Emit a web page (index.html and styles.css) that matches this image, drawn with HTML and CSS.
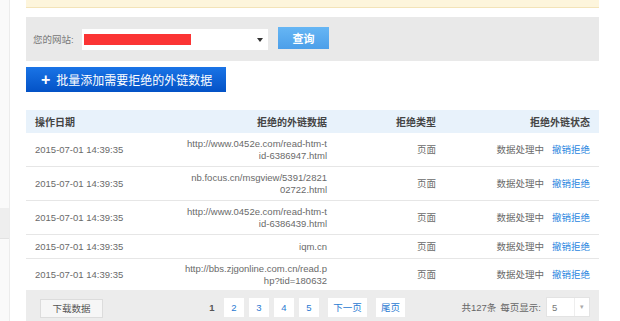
FILE: index.html
```html
<!DOCTYPE html>
<html lang="zh-CN">
<head>
  <meta charset="UTF-8">
  <title>拒绝外链</title>
  <link rel="stylesheet" href="styles.css">
</head>
<body>
  <div class="page">
    <div class="sidebar">
      <div class="side-item"></div>
    </div>
    <div class="main">
      <div class="notice"></div>

      <div class="filter">
        <span class="filter-label">您的网站:</span>
        <div class="site-select">
          <span class="redact"></span>
          <span class="caret"></span>
        </div>
        <button class="btn-query">查询</button>
      </div>

      <button class="btn-add"><span class="plus">+</span>批量添加需要拒绝的外链数据</button>

      <table class="links">
        <thead>
          <tr>
            <th class="c-date">操作日期</th>
            <th class="c-url">拒绝的外链数据</th>
            <th class="c-type">拒绝类型</th>
            <th class="c-state">拒绝外链状态</th>
          </tr>
        </thead>
        <tbody>
          <tr>
            <td class="c-date">2015-07-01 14:39:35</td>
            <td class="c-url">http://www.0452e.com/read-htm-t<br>id-6386947.html</td>
            <td class="c-type">页面</td>
            <td class="c-state">数据处理中<a class="undo">撤销拒绝</a></td>
          </tr>
          <tr>
            <td class="c-date">2015-07-01 14:39:35</td>
            <td class="c-url">nb.focus.cn/msgview/5391/2821<br>02722.html</td>
            <td class="c-type">页面</td>
            <td class="c-state">数据处理中<a class="undo">撤销拒绝</a></td>
          </tr>
          <tr>
            <td class="c-date">2015-07-01 14:39:35</td>
            <td class="c-url">http://www.0452e.com/read-htm-t<br>id-6386439.html</td>
            <td class="c-type">页面</td>
            <td class="c-state">数据处理中<a class="undo">撤销拒绝</a></td>
          </tr>
          <tr class="single">
            <td class="c-date">2015-07-01 14:39:35</td>
            <td class="c-url">iqm.cn</td>
            <td class="c-type">页面</td>
            <td class="c-state">数据处理中<a class="undo">撤销拒绝</a></td>
          </tr>
          <tr class="last">
            <td class="c-date">2015-07-01 14:39:35</td>
            <td class="c-url">http://bbs.zjgonline.com.cn/read.p<br>hp?tid=180632</td>
            <td class="c-type">页面</td>
            <td class="c-state">数据处理中<a class="undo">撤销拒绝</a></td>
          </tr>
        </tbody>
      </table>

      <div class="table-foot">
        <button class="btn-download">下载数据</button>
        <div class="pager">
          <span class="current">1</span>
          <a class="pg">2</a>
          <a class="pg">3</a>
          <a class="pg">4</a>
          <a class="pg">5</a>
          <a class="pg wide">下一页</a>
          <a class="pg mid">尾页</a>
        </div>
        <div class="per-page">
          <span>共127条</span>
          <span>每页显示:</span>
          <div class="size-select"><span class="size-val">5</span><span class="size-arrow">&#9662;</span></div>
        </div>
      </div>
    </div>
  </div>
</body>
</html>
```

FILE: styles.css
```css
body {
  margin: 0;
  background-color: #fff;
  font-family: "Liberation Sans", "Noto Sans CJK SC", sans-serif;
  color: #666;
}
.page {
  display: flex;
  min-height: 321px;
}
.sidebar {
  width: 9px;
  background-color: #fafafa;
  border-right: 1px solid #ececec;
  padding-top: 208px;
}
.side-item {
  height: 30px;
  background-color: #eeeeee;
  border-bottom: 1px solid #e2e2e2;
}
.main {
  width: 573px;
  margin-left: 16px;
}
.notice {
  height: 7px;
  background-color: #fdf5dc;
  border-bottom: 1px solid #f3e3b8;
}
.filter {
  margin-top: 9px;
  height: 44px;
  background-color: #e9e9e9;
  display: flex;
  align-items: center;
  padding-left: 7px;
}
.filter-label {
  font-size: 9.5px;
  color: #777;
  width: 49px;
}
.site-select {
  width: 186px;
  height: 21px;
  background-color: #fff;
  display: flex;
  align-items: center;
  padding-left: 2px;
  box-sizing: border-box;
  position: relative;
}
.redact {
  width: 107px;
  height: 11px;
  background-color: #fb3434;
}
.caret {
  position: absolute;
  right: 5px;
  top: 9px;
  border-left: 3px solid transparent;
  border-right: 3px solid transparent;
  border-top: 4px solid #333;
}
.btn-query {
  margin-left: 10px;
  margin-top: -2px;
  width: 51px;
  height: 22px;
  border: none;
  background: linear-gradient(#66b6f4, #4c9fe9);
  color: #fff;
  font-family: "Liberation Sans", "Noto Sans CJK SC", sans-serif;
  font-size: 11px;
  font-weight: bold;
  padding: 0;
}
.btn-add {
  margin-top: 6px;
  width: 200px;
  height: 25px;
  border: none;
  background: linear-gradient(#1a74e6, #0352c6);
  color: #fff;
  font-family: "Liberation Sans", "Noto Sans CJK SC", sans-serif;
  font-size: 12px;
  text-align: left;
  padding: 0 0 0 15px;
  display: flex;
  align-items: center;
}
.plus {
  font-size: 16px;
  font-weight: bold;
  margin-right: 6px;
  line-height: 1;
}
.links {
  margin-top: 18px;
  width: 573px;
  border-collapse: collapse;
  table-layout: fixed;
}
.links th {
  height: 23px;
  background-color: #e8f2fb;
  font-size: 10px;
  font-weight: bold;
  color: #444;
  padding: 0 9px;
}
.links td {
  height: 33px;
  font-size: 9.5px;
  line-height: 12px;
  color: #6a6a6a;
  padding: 0 9px;
  border-bottom: 1px solid #e6e6e6;
}
.links tr.single td {
  height: 23px;
}
.links tr.last td {
  height: 31px;
  border-bottom: none;
}
.c-date {
  width: 106px;
  text-align: left;
}
.c-url {
  width: 168px;
  text-align: right;
}
.c-type {
  width: 91px;
  text-align: right;
}
.c-state {
  text-align: right;
}
.undo {
  color: #2a86e0;
  margin-left: 8px;
}
.table-foot {
  height: 34px;
  background-color: #ececec;
  display: flex;
  align-items: center;
  padding: 0 9px 0 14px;
}
.btn-download {
  width: 63px;
  height: 19px;
  border: 1px solid #dcdcdc;
  background-color: #f6f6f6;
  color: #555;
  font-family: "Liberation Sans", "Noto Sans CJK SC", sans-serif;
  font-size: 9.5px;
  padding: 0;
  margin-top: 2px;
}
.pager {
  margin-left: 104px;
  display: flex;
  align-items: center;
  gap: 5px;
  font-size: 9.5px;
}
.current {
  width: 10px;
  font-weight: bold;
  color: #555;
  text-align: center;
  margin-right: 2px;
}
.pg {
  width: 20px;
  height: 19px;
  line-height: 19px;
  text-align: center;
  background-color: #fff;
  color: #2a7ad2;
}
.pg.wide {
  width: 39px;
  margin-left: 4px;
}
.pg.mid {
  width: 29px;
  margin-left: 4px;
}
.per-page {
  margin-left: auto;
  display: flex;
  align-items: center;
  gap: 4px;
  font-size: 9.5px;
  color: #666;
}
.size-select {
  margin-left: 1px;
  width: 44px;
  height: 20px;
  background-color: #fff;
  border: 1px solid #e3e3e3;
  box-sizing: border-box;
  display: flex;
  align-items: center;
}
.size-val {
  flex: 1;
  padding-left: 5px;
  color: #777;
}
.size-arrow {
  width: 14px;
  height: 18px;
  line-height: 18px;
  text-align: center;
  border-left: 1px solid #eee;
  font-size: 7px;
  color: #aaa;
}
```
